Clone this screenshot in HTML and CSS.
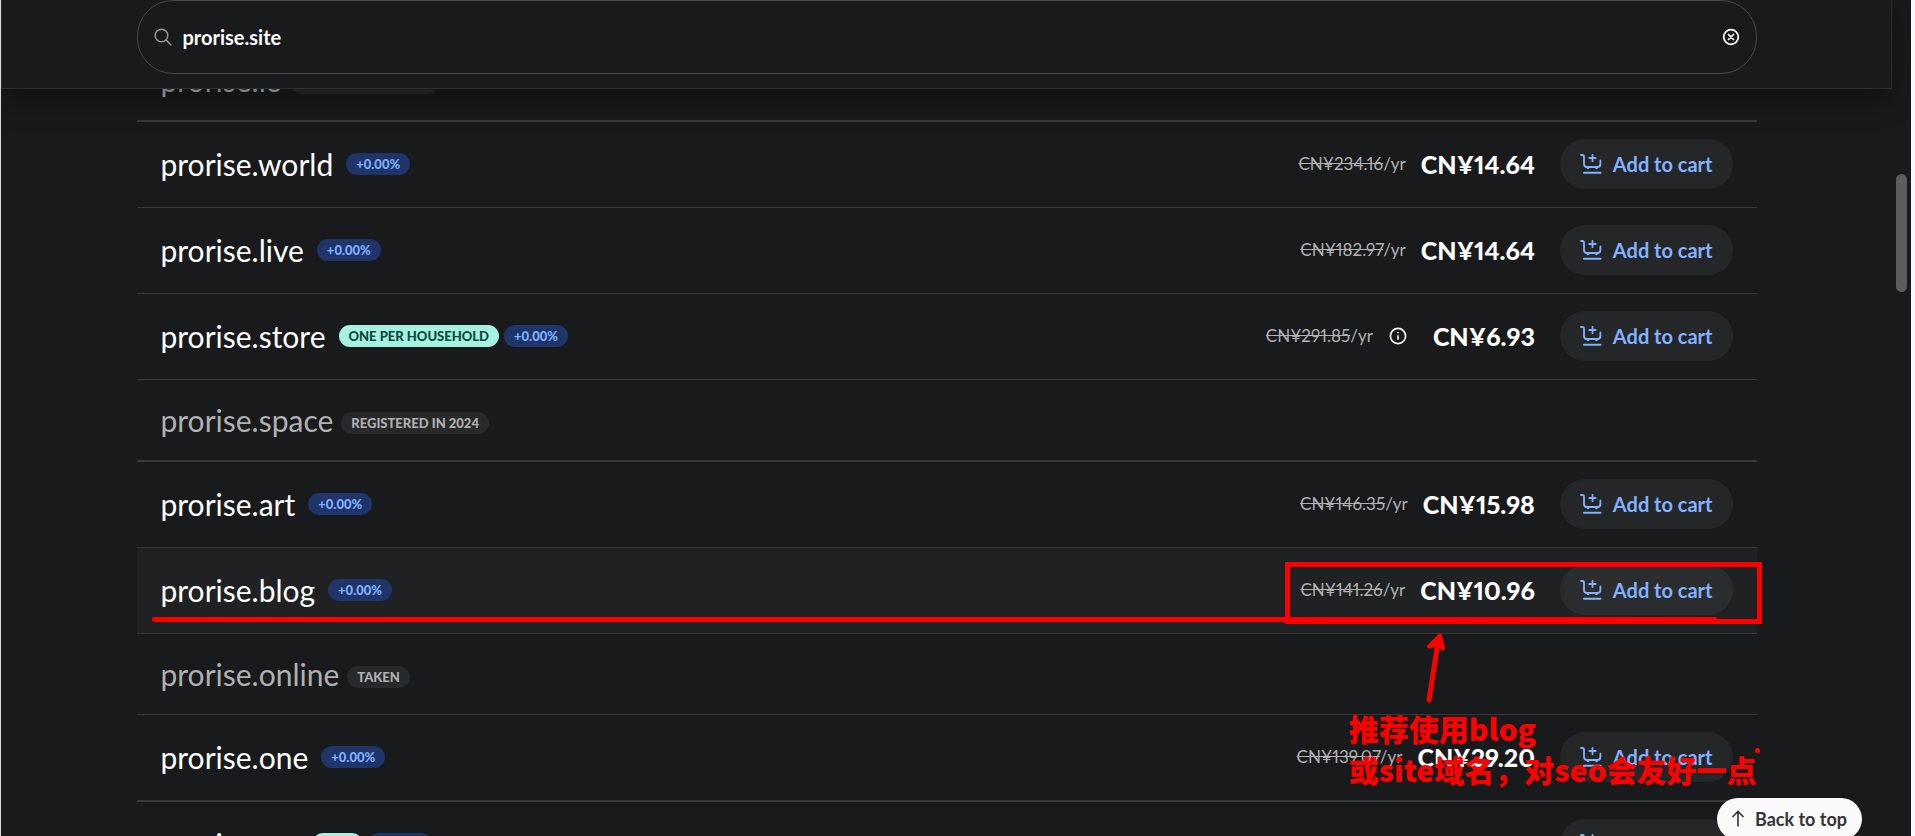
FILE: index.html
```html
<!DOCTYPE html>
<html lang="en">
<head>
<meta charset="utf-8">
<title>Domain search</title>
<link rel="stylesheet" href="styles.css">
</head>
<body>
<svg class="sprite" aria-hidden="true">
  <symbol id="cart" viewBox="0 0 22 22">
    <path d="M1 2h1.500q1.500 0 1.500 1.500V11q0 3 3 3h10.500q2.900 0 2.900-3V7.500" fill="none" stroke="currentColor" stroke-width="1.800" stroke-linecap="round"/>
    <path d="M12.500 1.800v6.400M9.300 5h6.400" fill="none" stroke="currentColor" stroke-width="1.800" stroke-linecap="round"/>
    <circle cx="8" cy="14.800" r="1.400" fill="currentColor"/><circle cx="16.500" cy="14.800" r="1.400" fill="currentColor"/>
    <path d="M4 19.800h16.500" stroke="currentColor" stroke-width="2" stroke-linecap="round"/>
  </symbol>
</svg>
<div class="page">
  <header class="header">
    <form class="search" role="search">
      <svg class="search-icon" viewBox="0 0 18 18"><circle cx="7.500" cy="7.500" r="6.300"/><path d="M12 12l4.800 4.800"/></svg>
      <input class="search-input" type="text" aria-label="Search for a domain" value="prorise.site">
      <button class="clear" type="button" aria-label="Clear"><svg viewBox="0 0 18 18"><circle cx="9" cy="9" r="7.300"/><path d="M6.500 6.500l5 5M11.500 6.500l-5 5"/></svg></button>
    </form>
  </header>
  <main class="content">
    <ul class="domains">
      <li class="row taken group-end"><span class="name">prorise.io</span><span class="tag muted">REGISTERED IN 2015</span></li>
      <li class="row"><span class="name">prorise.world</span><span class="tag blue">+0.00%</span><span class="old"><s>CN¥234.16</s>/yr</span><strong class="price">CN¥14.64</strong><button class="add" type="button"><svg><use href="#cart"/></svg>Add to cart</button></li>
      <li class="row"><span class="name">prorise.live</span><span class="tag blue">+0.00%</span><span class="old"><s>CN¥182.97</s>/yr</span><strong class="price">CN¥14.64</strong><button class="add" type="button"><svg><use href="#cart"/></svg>Add to cart</button></li>
      <li class="row"><span class="name">prorise.store</span><span class="tag mint">ONE PER HOUSEHOLD</span><span class="tag blue">+0.00%</span><span class="old"><s>CN¥291.85</s>/yr</span><button class="info" type="button" aria-label="Price details"><svg viewBox="0 0 18 18"><circle cx="9" cy="9" r="7.600"/><path d="M9 8.300v4.400M9 5v1.200"/></svg></button><strong class="price">CN¥6.93</strong><button class="add" type="button"><svg><use href="#cart"/></svg>Add to cart</button></li>
      <li class="row taken group-end"><span class="name">prorise.space</span><span class="tag muted">REGISTERED IN 2024</span></li>
      <li class="row"><span class="name">prorise.art</span><span class="tag blue">+0.00%</span><span class="old"><s>CN¥146.35</s>/yr</span><strong class="price">CN¥15.98</strong><button class="add" type="button"><svg><use href="#cart"/></svg>Add to cart</button></li>
      <li class="row active"><span class="name">prorise.blog</span><span class="tag blue">+0.00%</span><span class="old"><s>CN¥141.26</s>/yr</span><strong class="price">CN¥10.96</strong><button class="add" type="button"><svg><use href="#cart"/></svg>Add to cart</button>
        <div class="marks">
          <div class="underline"></div>
          <div class="box"></div>
          <svg class="arrow" viewBox="0 0 20 72"><path d="M4 67L13 9" fill="none" stroke="#f00" stroke-width="5" stroke-linecap="round"/><path d="M15 2.500L4 13.500L13 11L18 15.500Z" fill="#f00" stroke="#f00" stroke-width="4" stroke-linejoin="round"/></svg>
          <p class="note">推荐使用blog<br>或site域名，对seo会友好一点</p>
          <div class="dot"></div>
        </div>
      </li>
      <li class="row taken"><span class="name">prorise.online</span><span class="tag muted">TAKEN</span></li>
      <li class="row group-end"><span class="name">prorise.one</span><span class="tag blue">+0.00%</span><span class="old"><s>CN¥139.07</s>/yr</span><strong class="price">CN¥29.20</strong><button class="add" type="button"><svg><use href="#cart"/></svg>Add to cart</button></li>
      <li class="row"><span class="name">prorise.me</span><span class="tag mint">SALE</span><span class="tag blue">+0.00%</span><span class="old"><s>CN¥146.35</s>/yr</span><strong class="price">CN¥73.13</strong><button class="add" type="button"><svg><use href="#cart"/></svg>Add to cart</button></li>
    </ul>
  </main>
  <div class="scroll-thumb"></div>
  <a class="to-top" href="#"><svg viewBox="0 0 14 18"><path d="M7 16.500V1.500M1.500 7L7 1.500L12.500 7"/></svg>Back to top</a>
</div>
</body>
</html>
```
FILE: styles.css
```css
* { box-sizing: border-box; }

body {
  margin: 0;
  background: #191a1b;
  color: #fff;
  font-family: Lato, "Noto Sans CJK SC", sans-serif;
}

button, input { font: inherit; color: inherit; }
button { border: 0; background: none; padding: 0; cursor: pointer; }
.sprite { display: none; }

.page {
  position: relative;
  height: 100vh;
  overflow: hidden;
  padding-right: 19px;
  border-left: 1px solid #d8d8d8;
  border-right: 4px solid #f8f8f8;
}

.header {
  position: absolute;
  z-index: 2;
  top: 0;
  left: 0;
  right: 19px;
  padding: 0 120px 14px;
  background: #191a1b;
  border: 1px solid #2d2e30;
  border-top: 0;
  box-shadow: 0 8px 28px rgba(0, 0, 0, 0.4);
}

.search {
  display: flex;
  align-items: center;
  max-width: 1620px;
  height: 74px;
  margin: 0 auto;
  padding: 0 16px;
  border: 1px solid #47484a;
  border-radius: 36px;
}
.search svg { display: block; width: 18px; height: 18px; fill: none; stroke: #98999b; stroke-width: 1.5; stroke-linecap: round; }
.search-input {
  flex: 1;
  min-width: 0;
  padding: 0 11px;
  border: 0;
  outline: 0;
  background: none;
  font-size: 20px;
  font-weight: 700;
}
.search .clear svg { stroke: #fff; stroke-width: 1.7; }

.content { padding: 40px 120px 0; }
.domains { max-width: 1620px; margin: 0 auto; padding: 0; list-style: none; }

.row {
  position: relative;
  display: flex;
  align-items: center;
  height: 86px;
  padding: 0 24px 2px;
  border-bottom: 1px solid #37383a;
}
.row.group-end { height: 87px; border-bottom-width: 2px; }
.row.taken { height: 81px; padding-bottom: 0; color: #b0b0b0; }
.row.taken.group-end { height: 82px; }
.row.active { z-index: 1; background: #202122; }

.name { margin-right: 13px; font-size: 30px; line-height: 40px; }
.taken .name { margin-right: 8px; }

.tag {
  margin-right: 5px;
  padding: 0 10px;
  border-radius: 11px;
  font-size: 13px;
  line-height: 22px;
  font-weight: 900;
  white-space: nowrap;
}
.taken .tag { margin-top: 6px; }
.blue { background: #1f3468; color: #7eb0ff; }
.mint { background: #a6f1df; color: #0b4a40; }
.muted { background: #28292a; color: #b0b0b0; }

.old { margin-left: auto; color: #b0b0b0; font-size: 17px; font-variant-numeric: proportional-nums; }
.info { margin: 0 11px 0 16px; }
.info svg { display: block; width: 18px; height: 18px; fill: none; stroke: #fff; stroke-width: 1.6; }
.price { margin: 0 25px 0 15px; font-size: 25px; font-weight: 900; font-variant-numeric: proportional-nums; }

.add {
  display: flex;
  align-items: center;
  gap: 11px;
  height: 50px;
  padding: 0 20px;
  border-radius: 25px;
  background: #252628;
  color: #82b2ff;
  font-size: 20px;
  font-weight: 700;
  white-space: nowrap;
}
.add svg { width: 22px; height: 22px; }
.active .add { background: #2b2c2e; }

.marks { position: absolute; inset: 0; pointer-events: none; }
.marks > * { position: absolute; }
.underline { left: 15px; right: 40px; top: 69px; height: 5px; border-radius: 3px; background: #f00; }
.box { right: -5px; top: 14px; width: 477px; height: 62px; border: 5px solid #f00; }
.arrow { right: 312px; top: 85px; width: 20px; height: 72px; }
.note {
  right: 0;
  top: 160px;
  margin: 0;
  color: #f00;
  font: 900 30px/41px "Noto Sans CJK SC", sans-serif;
  white-space: nowrap;
}
.dot { right: -3px; top: 200px; width: 5px; height: 5px; border-radius: 50%; background: #f00; }

.scroll-thumb {
  position: absolute;
  top: 174px;
  right: 4px;
  width: 11px;
  height: 118px;
  border-radius: 6px;
  background: #5c5c5e;
}

.to-top {
  position: absolute;
  z-index: 3;
  right: 49px;
  bottom: -4px;
  display: flex;
  align-items: center;
  gap: 10px;
  height: 42px;
  padding: 0 15px 0 14px;
  border-radius: 21px;
  background: #fafafa;
  color: #333436;
  font-size: 18px;
  font-weight: 700;
  text-decoration: none;
}
.to-top svg { width: 14px; height: 18px; fill: none; stroke: #333436; stroke-width: 1.6; }
```
